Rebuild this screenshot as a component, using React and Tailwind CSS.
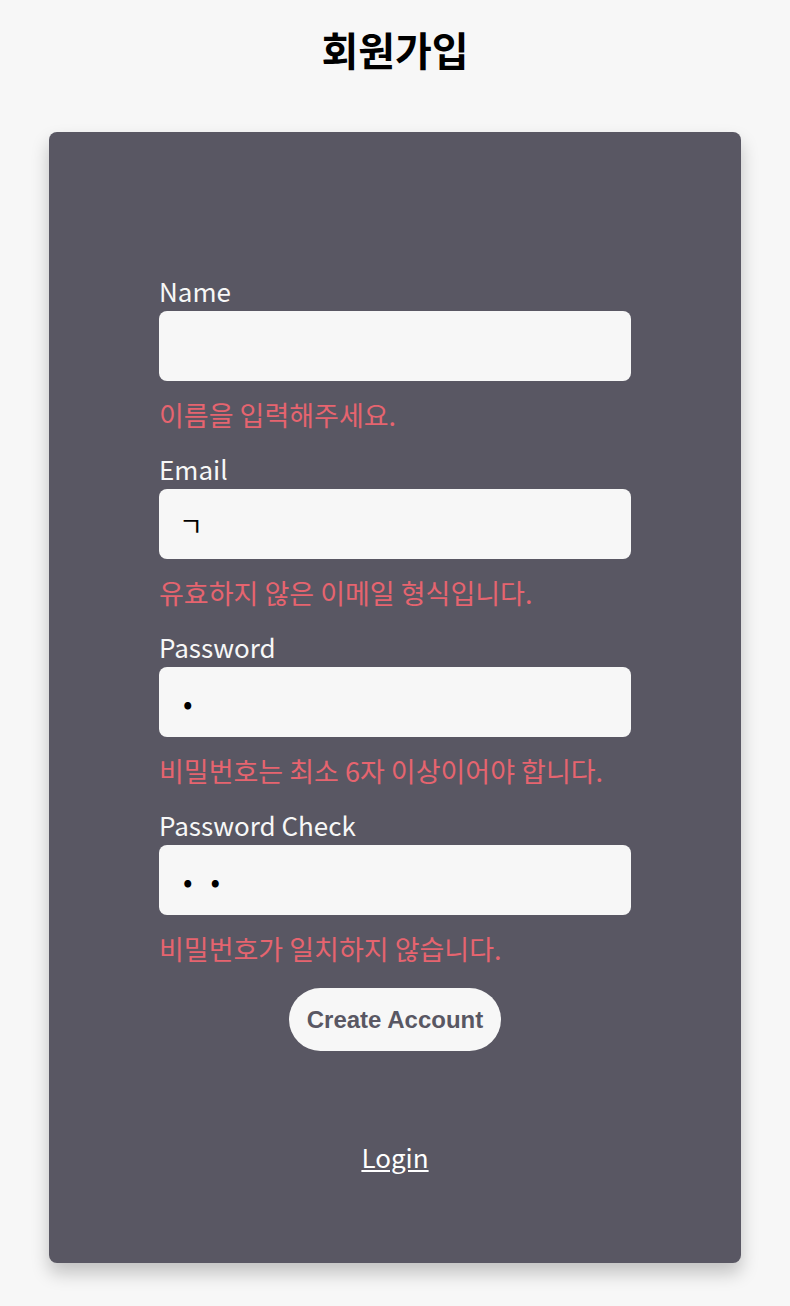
import React from "react";

function Field({ label, type = "text", value, error }) {
  const isPw = type === "password";
  return (
    <div className="flex flex-col">
      <label className="mb-[2px] font-['Noto_Sans_CJK_KR',sans-serif] text-[26px] leading-[36px] text-[#f7f7f7]">
        {label}
      </label>
      <input
        type={type}
        defaultValue={value}
        readOnly
        className={
          isPw
            ? "h-[70px] w-full rounded-lg bg-[#f7f7f7] pl-[24px] pr-[20px] font-['Noto_Sans_CJK_KR',sans-serif] text-[28px] tracking-[18px] text-black outline-none"
            : "h-[70px] w-full rounded-lg bg-[#f7f7f7] px-[20px] font-['Noto_Sans_CJK_KR',sans-serif] text-[26px] text-black outline-none"
        }
      />
      <p className="mt-[16px] font-['Noto_Sans_CJK_KR',sans-serif] text-[27px] leading-[36px] text-[#e6646f]">
        {error}
      </p>
    </div>
  );
}

export default function App() {
  return (
    <div className="min-h-screen bg-[#f7f7f7] pt-[25px] pb-[43px] font-['Noto_Sans_CJK_KR',sans-serif]">
      <h1 className="text-center text-[40px] font-bold leading-[48px] text-black">회원가입</h1>
      <div className="mx-auto mt-[59px] w-[692px] rounded-lg bg-[#595763] pt-[141px] pb-[88px] shadow-[0_10px_18px_rgba(0,0,0,0.22)]">
        <form className="mx-auto flex w-[472px] flex-col gap-[18px]">
          <Field label="Name" value="" error="이름을 입력해주세요." />
          <Field label="Email" value="ㄱ" error="유효하지 않은 이메일 형식입니다." />
          <Field label="Password" type="password" value="a" error="비밀번호는 최소 6자 이상이어야 합니다." />
          <Field label="Password Check" type="password" value="ab" error="비밀번호가 일치하지 않습니다." />
        </form>
        <div className="mt-[21px] flex justify-center">
          <button
            type="button"
            className="h-[63px] w-[212px] rounded-full bg-[#f7f7f7] font-['Liberation_Sans',Arial,sans-serif] text-[24px] font-bold text-[#595763]"
          >
            Create Account
          </button>
        </div>
        <div className="mt-[88px] flex justify-center">
          <a href="#" className="text-[26px] leading-[36px] text-white underline">
            Login
          </a>
        </div>
      </div>
    </div>
  );
}
